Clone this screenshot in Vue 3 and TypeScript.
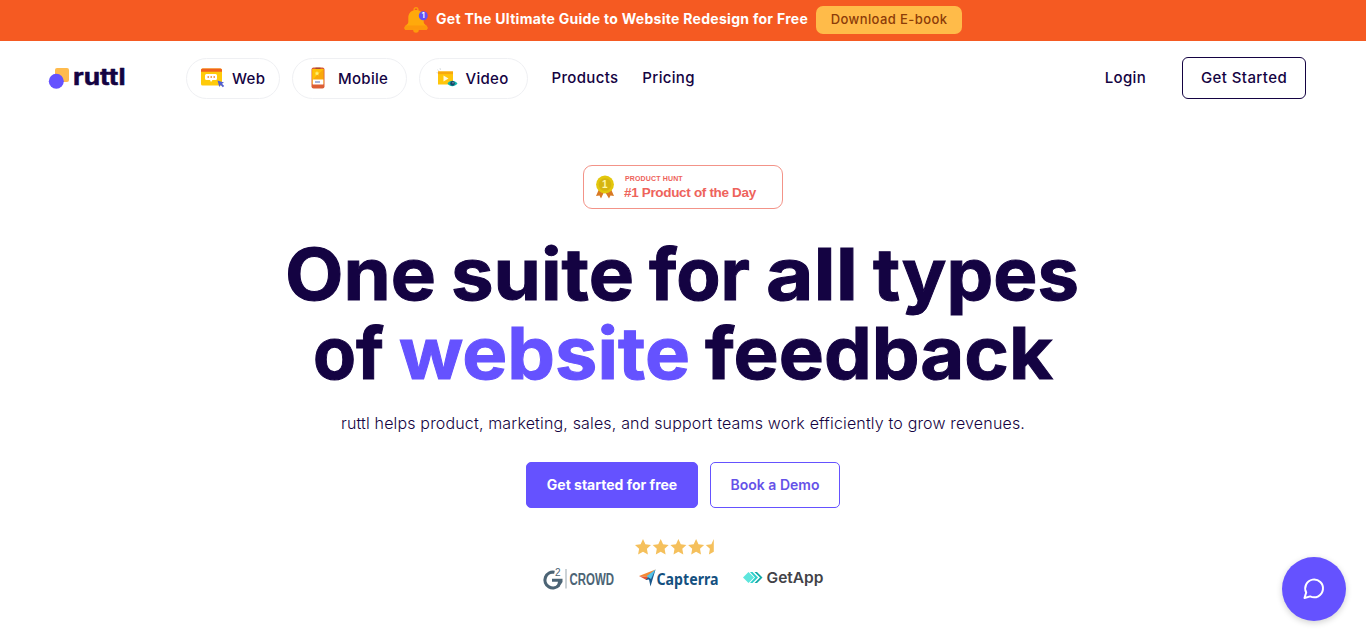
<script setup lang="ts">
interface TitleWord {
    text: string;
    x: number;
    y: number;
    width: number;
    accent?: boolean;
}

const products = ['Web', 'Mobile', 'Video'];

const words: TitleWord[] = [
    { text: 'One', x: 2, y: 70, width: 151 },
    { text: 'suite', x: 168, y: 70, width: 183 },
    { text: 'for', x: 366, y: 70, width: 101 },
    { text: 'all', x: 483, y: 70, width: 92 },
    { text: 'types', x: 590, y: 70, width: 206 },
    { text: 'of', x: 30, y: 149, width: 71 },
    { text: 'website', x: 116, y: 149, width: 291, accent: true },
    { text: 'feedback', x: 422, y: 149, width: 348 },
];

const starPath = 'M8 0 L10.4 5.2 L16 5.9 L11.9 9.8 L12.9 15.4 L8 12.7 L3.1 15.4 L4.1 9.8 L0 5.9 L5.6 5.2 Z';
</script>

<template>
    <div class="page">
        <div class="banner">
            <svg class="bell" width="24" height="26" viewBox="0 0 24 26">
                <circle cx="12" cy="2.6" r="1.9" fill="none" stroke="#fd9a0c" stroke-width="1.4" />
                <circle cx="12" cy="23" r="2.8" fill="#fd9a0c" />
                <path d="M12 3 C6.500 3 4.300 7 4.300 11 V15 C4.300 17.500 0.500 18.500 0.500 21 C0.500 22.300 1.300 22.800 2.300 22.800 H21.700 C22.700 22.800 23.500 22.300 23.500 21 C23.500 18.500 19.700 17.500 19.700 15 V11 C19.700 7 17.500 3 12 3Z" fill="#ffa90b" />
                <path d="M1.500 18.600 H22.500 C23.200 19.400 23.500 20 23.500 21 C23.500 22.300 22.700 22.800 21.700 22.800 H2.300 C1.300 22.800 0.500 22.300 0.500 21 C0.500 20 0.800 19.400 1.500 18.600Z" fill="#fd980b" />
                <circle cx="19.300" cy="8.700" r="4.500" fill="#6152f5" />
                <text x="17.800" y="11.400" class="bell-count">1</text>
            </svg>
            <span class="banner-text">Get The Ultimate Guide to Website Redesign for Free</span>
            <a class="ebook">Download E-book</a>
        </div>

        <header class="nav">
            <svg class="logo" width="78" height="26" viewBox="0 0 78 26">
                <rect x="7" y="3" width="14" height="14" rx="2" fill="#ffbb4d" />
                <circle cx="8.300" cy="16.300" r="7.500" fill="#6552ff" />
                <text x="25" y="20" textLength="52.500" lengthAdjust="spacingAndGlyphs" class="logo-text">ruttl</text>
            </svg>
            <nav class="pills">
                <a v-for="name in products" :key="name" class="pill" :class="name.toLowerCase()">
                    <svg v-if="name === 'Web'" width="24" height="20" viewBox="0 0 24 20">
                        <rect x="0" y="0.500" width="21" height="17" rx="1.500" fill="#ffca0a" />
                        <path d="M1.500 0.500 H19.500 Q21 0.500 21 2 V3.700 H0 V2 Q0 0.500 1.500 0.500Z" fill="#f0621e" />
                        <path d="M5.500 6 H14.500 Q16 6 16 7.500 V10.500 Q16 12 14.500 12 H11.500 L10 14 L9 12 H5.500 Q4 12 4 10.500 V7.500 Q4 6 5.500 6Z" fill="#fff" />
                        <path d="M6.500 9h1.500 M9.500 9h1.500 M12.500 9h1.500" stroke="#f0821e" stroke-width="1.300" />
                        <path d="M16.500 12.500 L23 14.500 L21 15.700 L23.200 18 L21.800 19.300 L19.700 17 L18.300 19Z" fill="#5360cf" />
                    </svg>
                    <svg v-else-if="name === 'Mobile'" width="14" height="22" viewBox="0 0 14 22">
                        <rect x="0.500" y="0.500" width="13" height="21" rx="2" fill="#dc5e35" />
                        <rect x="1.300" y="2" width="11.400" height="15" fill="#f9a90c" />
                        <path d="M1.300 2 H12.700 L1.300 13Z" fill="#ffc107" />
                        <path d="M4.500 1.200 H9.500" stroke="#8f3e35" stroke-width="1" />
                        <path d="M6 4 L6.700 5.500 L8.300 5.700 L7.200 6.800 L7.500 8.400 L6 7.600 L4.500 8.400 L4.800 6.800 L3.700 5.700 L5.300 5.500Z" fill="#fff173" />
                        <rect x="1.800" y="12.500" width="10.500" height="5" fill="#fff" />
                        <path d="M4 15 H9" stroke="#4f6ab8" stroke-width="1" />
                    </svg>
                    <svg v-else width="22" height="20" viewBox="0 0 22 20">
                        <path d="M0.500 4.500 L2 5 M1.500 1.500 L3 3.500 M4 0 L4.500 2" stroke="#d1d5dc" stroke-width="0.800" />
                        <rect x="2" y="3.500" width="15" height="13" fill="#ffc60b" />
                        <rect x="2" y="3.500" width="15" height="2.600" fill="#f8a80d" />
                        <path d="M7.500 7.500 L12.500 10.600 L7.500 13.500Z" fill="#fff9df" />
                        <path d="M11.500 15.500 C14 11.800 18.500 11.800 21.500 15.500 C18.500 19 14 19 11.500 15.500Z" fill="#12b6ad" />
                        <circle cx="16.500" cy="15.400" r="2.300" fill="#174668" />
                        <circle cx="17" cy="14.800" r="0.600" fill="#ddf" />
                    </svg>
                    <span>{{ name }}</span>
                </a>
            </nav>
            <a class="link">Products</a>
            <a class="link">Pricing</a>
            <a class="link login">Login</a>
            <a class="get-started">Get Started</a>
        </header>

        <main class="hero">
            <div class="badge">
                <svg width="20" height="24" viewBox="0 0 20 24">
                    <path d="M4.500 13 L1 21 L4.500 20.500 L6 23.500 L9.500 16 L14 23.500 L15.500 20.500 L19 21 L15.500 13Z" fill="#d87924" />
                    <circle cx="10" cy="9.500" r="8.900" fill="#e3c70c" />
                    <circle cx="10" cy="9.500" r="6.300" fill="#d6b510" />
                    <text x="7" y="13.200" class="medal">1</text>
                </svg>
                <div class="badge-copy">
                    <span class="badge-label">PRODUCT HUNT</span>
                    <span class="badge-title">#1 Product of the Day</span>
                </div>
            </div>

            <h1 class="title">
                <svg width="800" height="180" viewBox="0 0 800 180">
                    <text v-for="word in words" :key="word.text" :x="word.x" :y="word.y" :textLength="word.width"
                        lengthAdjust="spacingAndGlyphs" :class="{ accent: word.accent }">{{ word.text }}</text>
                </svg>
            </h1>

            <p class="lead">ruttl helps product, marketing, sales, and support teams work efficiently to grow revenues.</p>

            <div class="actions">
                <a class="btn primary">Get started for free</a>
                <a class="btn outline">Book a Demo</a>
            </div>

            <svg class="stars" width="96" height="16" viewBox="0 0 96 16">
                <path v-for="n in 4" :key="n" :d="starPath" :transform="`translate(${(n - 1) * 17.7} 0)`" fill="#f5c05c" />
                <path d="M8 0 V12.700 L3.100 15.400 L4.100 9.800 L0 5.900 L5.600 5.200Z" transform="translate(70.800 0)" fill="#f5c05c" />
            </svg>

            <div class="reviews">
                <svg width="74" height="22" viewBox="0 0 74 22">
                    <path d="M12.500 4.300 A7.900 7.900 0 1 0 17 17" fill="none" stroke="#4c6475" stroke-width="3.200" />
                    <path d="M10 10.800 H20.500 V14 L17.500 18.500 L15.300 16.500 L16 13.700 H10Z" fill="#4c6475" />
                    <text x="13" y="7.500" class="g2-two">2</text>
                    <path d="M24 1 V20.500" stroke="#9aa7af" stroke-width="1" />
                    <text x="27.500" y="16.500" textLength="44.500" lengthAdjust="spacingAndGlyphs" class="crowd">CROWD</text>
                </svg>
                <svg width="82" height="22" viewBox="0 0 82 22">
                    <path d="M1 8 L17.500 1.500 L10.500 9.300Z" fill="#f58a35" />
                    <path d="M1 8 L10.500 9.300 L8.500 12Z" fill="#e55332" />
                    <path d="M17.500 1.500 L12.500 18.500 L11 11.500 L7.500 12Z" fill="#1b578b" />
                    <path d="M17.500 1.500 L8.500 8.300 L13 11Z" fill="#55c3e8" />
                    <text x="18.500" y="16.500" textLength="62" lengthAdjust="spacingAndGlyphs" class="capterra">Capterra</text>
                </svg>
                <svg width="82" height="22" viewBox="0 0 82 22">
                    <path d="M1 9.500 L6.500 4 L12 9.500 L6.500 15Z" fill="#5de5dc" />
                    <path d="M8 4 H10.500 L16 9.500 L10.500 15 H8 L13 9.500Z" fill="#2dd0cb" />
                    <path d="M12.500 4 H15 L20.500 9.500 L15 15 H12.500 L18 9.500Z" fill="#12a9a7" />
                    <text x="24.500" y="15" textLength="57" lengthAdjust="spacingAndGlyphs" class="getapp">GetApp</text>
                </svg>
            </div>
        </main>

        <button class="chat" aria-label="Chat">
            <svg width="22" height="22" viewBox="0 0 22 22" fill="none" stroke="#fff" stroke-width="2" stroke-linejoin="round">
                <path d="M3.200 14.500 A8.900 8.900 0 1 1 7.200 18.400 L1.500 20Z" />
            </svg>
        </button>
    </div>
</template>

<style>
body {
    margin: 0;
    background: #fff;
    overflow: hidden;
}
</style>

<style scoped>
.page {
    height: 641px;
    font-family: Inter, sans-serif;
    color: #140342;
}

svg {
    flex-shrink: 0;
    overflow: visible;
}

.banner {
    display: flex;
    justify-content: center;
    height: 41px;
    background: #f55a22;
    color: #fff;
    box-sizing: border-box;
    padding-top: 6px;
}

.bell {
    margin: 1px 8px 0 0;
}

.bell-count {
    font: 700 7px Inter, sans-serif;
    fill: #fff;
}

.banner-text {
    width: 372px;
    margin-right: 8px;
    font-size: 14px;
    font-weight: 700;
    letter-spacing: 0.29px;
    line-height: 26px;
    white-space: nowrap;
}

.ebook {
    width: 146px;
    height: 28px;
    border-radius: 7px;
    background: #ffbb49;
    color: #8c3c08;
    font-size: 13px;
    font-weight: 500;
    letter-spacing: 0.4px;
    line-height: 27px;
    text-align: center;
}

.nav {
    display: flex;
    align-items: center;
    height: 74px;
    padding: 0 60px 0 48px;
}

.logo {
    margin-right: 60px;
}

.logo-text {
    font: 700 23px Inter, sans-serif;
    fill: #140342;
    stroke: #140342;
    stroke-width: 0.5px;
    stroke-linejoin: round;
}

.pills {
    display: flex;
    gap: 12px;
    margin-right: 23.5px;
}

.pill {
    display: flex;
    align-items: center;
    box-sizing: border-box;
    height: 41px;
    border: 1px solid #eff0f3;
    border-radius: 21px;
    font-size: 15px;
    font-weight: 500;
    letter-spacing: 0.3px;
}

.web {
    width: 94px;
    padding-left: 14px;
    gap: 7px;
}

.mobile {
    width: 115px;
    padding-left: 18px;
    gap: 13px;
}

.video {
    width: 109px;
    padding-left: 16px;
    gap: 7.5px;
}

.link {
    margin-right: 24px;
    padding-bottom: 2px;
    font-size: 15px;
    font-weight: 500;
    letter-spacing: 0.33px;
}

.login {
    margin: 0 36px 0 auto;
}

.get-started {
    box-sizing: border-box;
    width: 124px;
    height: 42px;
    border: 1px solid #140342;
    border-radius: 6px;
    font-size: 15px;
    font-weight: 500;
    letter-spacing: 0.42px;
    line-height: 40px;
    text-align: center;
}

.hero {
    display: flex;
    flex-direction: column;
    align-items: center;
    padding-top: 50px;
}

.badge {
    display: flex;
    box-sizing: border-box;
    width: 200px;
    height: 44px;
    padding: 9px 0 0 11px;
    border: 1px solid #f39388;
    border-radius: 9px;
    color: #ee635b;
    font-family: "Liberation Sans", Arial, sans-serif;
}

.medal {
    font: 700 10px "Liberation Sans", sans-serif;
    fill: #fff7a8;
}

.badge-copy {
    display: flex;
    flex-direction: column;
    margin-left: 10px;
    white-space: nowrap;
}

.badge-label {
    font-size: 7px;
    font-weight: 700;
    letter-spacing: 0.15px;
    line-height: 8px;
}

.badge-title {
    margin-left: -1px;
    font-size: 13.5px;
    font-weight: 700;
    letter-spacing: -0.33px;
    line-height: 19px;
}

.title {
    height: 180px;
    margin: 21px 0 0;
}

.title svg {
    display: block;
}

.title text {
    font: 700 72px Inter, sans-serif;
    fill: #140342;
    stroke: #140342;
    stroke-width: 1px;
}

.title .accent {
    fill: #6552ff;
    stroke: #6552ff;
}

.lead {
    margin: 0;
    font-size: 16px;
    font-weight: 300;
    letter-spacing: 0.165px;
    line-height: 26px;
    white-space: nowrap;
}

.actions {
    display: flex;
    gap: 12px;
    margin-top: 26px;
}

.btn {
    box-sizing: border-box;
    height: 46px;
    border: 1px solid #6552ff;
    border-radius: 5px;
    font-size: 14px;
    line-height: 44px;
    text-align: center;
}

.primary {
    width: 172px;
    background: #6552ff;
    color: #fff;
    font-weight: 700;
}

.outline {
    width: 130px;
    color: #6552e8;
    font-weight: 600;
}

.stars {
    margin-top: 31px;
}

.reviews {
    display: flex;
    justify-content: space-between;
    width: 282px;
    margin-top: 13px;
}

.g2-two {
    font: 400 10px "Liberation Sans", sans-serif;
    fill: #4c6475;
}

.crowd {
    font: 700 16px "Liberation Sans", sans-serif;
    fill: #4c6475;
}

.capterra {
    font: 700 15.5px "Noto Sans", sans-serif;
    fill: #14507f;
}

.getapp {
    font: 600 15px Inter, sans-serif;
    fill: #424247;
}

.chat {
    position: fixed;
    right: 20px;
    bottom: 20px;
    display: flex;
    align-items: center;
    justify-content: center;
    width: 64px;
    height: 64px;
    padding: 0;
    border: 0;
    border-radius: 50%;
    background: #6552ff;
    box-shadow: 0 2px 6px rgba(0, 0, 0, 0.18);
}
</style>
